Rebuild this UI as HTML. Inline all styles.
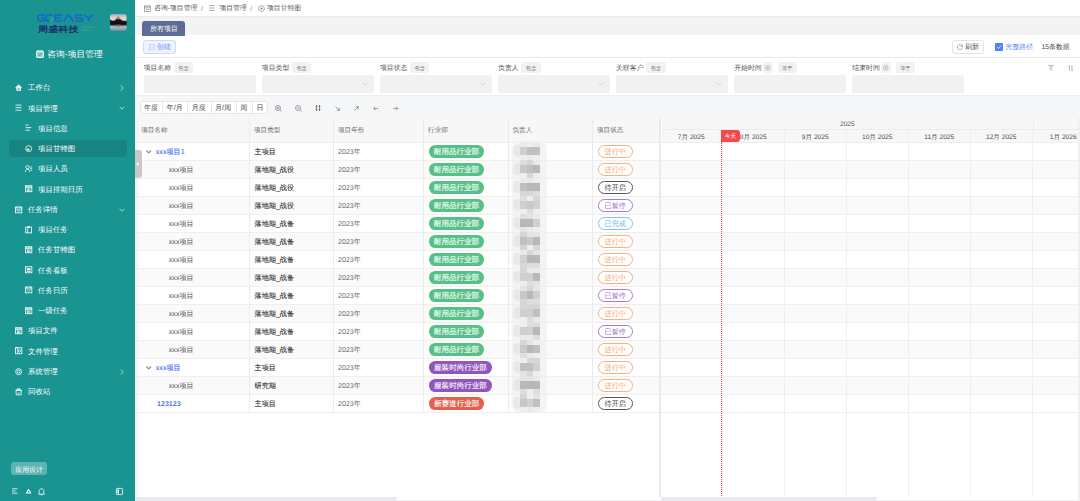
<!DOCTYPE html><html><head><meta charset="utf-8"><style>
*{box-sizing:border-box;margin:0;padding:0}
html,body{width:1080px;height:501px;overflow:hidden;background:#fff;font-family:"Liberation Sans",sans-serif;color:#333;text-rendering:geometricPrecision}
.a{position:absolute}
.t{position:absolute;white-space:nowrap;line-height:1}
.c{position:absolute;white-space:nowrap;display:flex;align-items:center;justify-content:center}
#sb{position:absolute;left:0;top:0;width:135px;height:501px;background:#1a9491;overflow:hidden}
.mi{position:absolute;color:#fff;font-size:7.45px;white-space:nowrap;line-height:1}
svg{position:absolute;overflow:visible}
</style></head><body><div id="sb"><svg style="left:37px;top:14px" width="57" height="8" viewBox="0 0 57 8"><g fill="none" stroke="#1763d4" stroke-width="1.5" stroke-linecap="butt"><path d="M7.6 1.1H3.2A2.5 2.9 0 0 0 0.75 4A2.5 2.9 0 0 0 3.2 6.9H7.3V4.2H4.3"/><path d="M15.5 1.1H11.6A2.6 2.9 0 0 0 9 4A2.6 2.9 0 0 0 11.6 6.9H13"/><path d="M24.8 1.1H18.2V6.9H24.8M18.2 4H24"/><path d="M26.5 7.5L31.5 0.8L36.5 7.5"/><path d="M45.5 1.1H39.8A1.4 1.45 0 0 0 39.8 4H44.2A1.4 1.45 0 0 1 44.2 6.9H38"/><path d="M47 0.8L51.8 4.2L56.6 0.8M51.8 4.2V7.5"/></g><path d="M13 6.9A2.6 2.9 0 0 0 15.6 4" stroke="#1fb59a" stroke-width="1.5" fill="none"/></svg><div class="t" style="left:37.5px;top:25.6px;font-size:8.2px;font-weight:bold;color:#1b2f68;transform:scaleX(1.24);transform-origin:0 0">周盛科技</div><div class="t" style="left:81px;top:25.8px;font-size:2.6px;color:#6fa9a8;line-height:1.25;letter-spacing:0.2px">ICHUANG<br>TECH</div><svg style="left:110px;top:14px" width="16.75" height="16.75" viewBox="0 0 17 17"><defs><clipPath id="av"><rect width="17" height="17" rx="2.6"/></clipPath><linearGradient id="sky" x1="0" y1="0" x2="0" y2="1"><stop offset="0" stop-color="#86a9cf"/><stop offset="0.4" stop-color="#e3d3c6"/></linearGradient><linearGradient id="wat" x1="0" y1="0" x2="0" y2="1"><stop offset="0" stop-color="#26303c"/><stop offset="0.5" stop-color="#a8b7c4"/><stop offset="1" stop-color="#7f9ab4"/></linearGradient></defs><g clip-path="url(#av)"><rect width="17" height="8.5" fill="url(#sky)"/><rect y="8.5" width="17" height="8.5" fill="url(#wat)"/><path d="M0 5.5L2 6.8L5 6.5L8.3 2.6L12 6.5L15 7L17 6.5V10.5H0Z" fill="#0d1420"/><path d="M8.3 2.6L6.6 5.2L7.6 5.6L8.6 5L10.2 5.7L11 5.5Z" fill="#e2804a"/><path d="M0 9.6H17V11H0Z" fill="#05080d"/><path d="M5.5 11L8.3 14.3L11.2 11Z" fill="#d37a45"/><path d="M0 11H17V11.5L12 11.6L8.3 11.4L4 11.7L0 11.5Z" fill="#1c2633"/></g></svg><div class="t" style="left:47.3px;top:50px;font-size:8.75px;color:#fff">咨询-项目管理</div><svg style="left:36px;top:50px" width="8" height="8" viewBox="0 0 8 8"><rect x="0.6" y="1" width="6.8" height="6.5" rx="0.5" fill="rgba(255,255,255,0.55)" stroke="#fff" stroke-width="0.9"/><path d="M2.2 0.2v1.6M5.8 0.2v1.6" stroke="#fff" stroke-width="1"/><path d="M2.3 4.4L3.4 5.7L5.7 3.6" stroke="#1a9491" fill="none" stroke-width="0.9"/></svg><div class="a" style="left:9px;top:140.2px;width:118px;height:17px;border-radius:3px;background:rgba(0,0,0,0.1)"></div><div class="mi" style="left:28px;top:84.45px">工作台</div><svg style="left:14.7px;top:84.2px" width="7.3" height="7.3" viewBox="0 0 8 8"><path d="M0.5 3.9L4 0.9L7.5 3.9" stroke="#fff" fill="none" stroke-width="0.9" stroke-width="1"/><path d="M1.5 3.4L4 1.3L6.5 3.4V7.4H1.5Z" fill="#fff"/><rect x="2.9" y="4.9" width="2.2" height="1.4" fill="#1a9491"/></svg><svg style="left:119.5px;top:85.00px" width="4" height="6" viewBox="0 0 4 6"><path d="M0.8 0.6L3.2 3L0.8 5.4" stroke="#cfe7e6" fill="none" stroke-width="0.8"/></svg><div class="mi" style="left:28px;top:104.70px">项目管理</div><svg style="left:14.7px;top:104.45px" width="7.3" height="7.3" viewBox="0 0 8 8"><path d="M0.5 1.2h6.6M0.5 4h6.6M0.5 6.8h6.6" stroke="#fff" fill="none" stroke-width="0.9" stroke-width="1"/></svg><svg style="left:118.5px;top:106.25px" width="6" height="4" viewBox="0 0 6 4"><path d="M0.6 0.8L3 3.2L5.4 0.8" stroke="#cfe7e6" fill="none" stroke-width="0.8"/></svg><div class="mi" style="left:38px;top:124.95px">项目信息</div><svg style="left:24.7px;top:124.3px" width="7.3" height="7.3" viewBox="0 0 8 8"><path d="M0.5 1.2h3.5M0.5 4h6.5M0.5 6.8h5" stroke="#fff" fill="none" stroke-width="0.9" stroke-width="1"/></svg><div class="mi" style="left:38px;top:145.20px">项目甘特图</div><svg style="left:24.7px;top:144.55px" width="7.3" height="7.3" viewBox="0 0 8 8"><circle cx="4" cy="4" r="3.25" stroke="#fff" fill="none" stroke-width="0.9" stroke-width="1"/><path d="M4.3 3.7L4.3 6A2.2 2.2 0 0 1 1.9 3.7Z" fill="#fff" transform="rotate(-20 4 4)"/></svg><div class="mi" style="left:38px;top:165.45px">项目人员</div><svg style="left:24.7px;top:164.8px" width="7.3" height="7.3" viewBox="0 0 8 8"><circle cx="2.8" cy="2.4" r="1.8" stroke="#fff" fill="none" stroke-width="0.9"/><path d="M0.3 7.6C0.6 5.6 1.6 4.6 2.8 4.6S5 5.6 5.3 7.6M5.8 2.2h2M5.8 4h2M6.2 5.8h1.6" stroke="#fff" fill="none" stroke-width="0.9"/></svg><div class="mi" style="left:38px;top:185.70px">项目排期日历</div><svg style="left:24.7px;top:185.05px" width="7.3" height="7.3" viewBox="0 0 8 8"><rect x="0.5" y="0.8" width="7" height="6.6" stroke="#fff" fill="none" stroke-width="0.9"/><path d="M0.5 2.3h7" stroke="#fff" stroke-width="1.4"/><path d="M2.6 3.6v3.6M4 3.6v3.6M5.4 3.6v3.6" stroke="#fff" fill="none" stroke-width="0.9" stroke-width="0.7"/></svg><div class="mi" style="left:28px;top:205.95px">任务详情</div><svg style="left:14.7px;top:205.7px" width="7.3" height="7.3" viewBox="0 0 8 8"><rect x="0.5" y="1.2" width="7" height="6.3" stroke="#fff" fill="none" stroke-width="0.9"/><path d="M2.3 0.2v2M5.7 0.2v2M0.5 3.4h7M2 5.3h4" stroke="#fff" fill="none" stroke-width="0.9"/></svg><svg style="left:118.5px;top:207.50px" width="6" height="4" viewBox="0 0 6 4"><path d="M0.6 0.8L3 3.2L5.4 0.8" stroke="#cfe7e6" fill="none" stroke-width="0.8"/></svg><div class="mi" style="left:38px;top:226.20px">项目任务</div><svg style="left:24.7px;top:225.55px" width="7.3" height="7.3" viewBox="0 0 8 8"><rect x="0.8" y="1.2" width="6.4" height="6.3" stroke="#fff" fill="none" stroke-width="0.9"/><rect x="2.5" y="0.4" width="3" height="1.8" fill="#fff"/><path d="M3 1.2v6.3" stroke="#fff" fill="none" stroke-width="0.9"/></svg><div class="mi" style="left:38px;top:246.45px">任务甘特图</div><svg style="left:24.7px;top:245.8px" width="7.3" height="7.3" viewBox="0 0 8 8"><rect x="0.5" y="0.8" width="7" height="6.6" stroke="#fff" fill="none" stroke-width="0.9"/><path d="M0.5 2.3h7" stroke="#fff" stroke-width="1.4"/><path d="M2.6 3.6v3.6M4 3.6v3.6M5.4 3.6v3.6" stroke="#fff" fill="none" stroke-width="0.9" stroke-width="0.7"/></svg><div class="mi" style="left:38px;top:266.70px">任务看板</div><svg style="left:24.7px;top:266.05px" width="7.3" height="7.3" viewBox="0 0 8 8"><rect x="0.5" y="0.8" width="7" height="6.6" stroke="#fff" fill="none" stroke-width="0.9"/><rect x="2" y="2.3" width="4" height="2.5" fill="#fff"/><path d="M2 6h4" stroke="#fff" fill="none" stroke-width="0.9"/></svg><div class="mi" style="left:38px;top:286.95px">任务日历</div><svg style="left:24.7px;top:286.3px" width="7.3" height="7.3" viewBox="0 0 8 8"><rect x="0.5" y="1.2" width="7" height="6.3" stroke="#fff" fill="none" stroke-width="0.9"/><path d="M2.3 0.2v2M5.7 0.2v2M0.5 3.2h7M2.5 5.2l1.2 1 2-2" stroke="#fff" fill="none" stroke-width="0.9"/></svg><div class="mi" style="left:38px;top:307.20px">一级任务</div><svg style="left:24.7px;top:306.55px" width="7.3" height="7.3" viewBox="0 0 8 8"><rect x="0.5" y="0.8" width="7" height="6.6" stroke="#fff" fill="none" stroke-width="0.9"/><path d="M0.5 2.3h7" stroke="#fff" stroke-width="1.4"/><path d="M2.6 3.6v3.6M4 3.6v3.6M5.4 3.6v3.6" stroke="#fff" fill="none" stroke-width="0.9" stroke-width="0.7"/></svg><div class="mi" style="left:28px;top:327.45px">项目文件</div><svg style="left:14.7px;top:327.2px" width="7.3" height="7.3" viewBox="0 0 8 8"><rect x="0.5" y="0.8" width="7" height="6.6" stroke="#fff" fill="none" stroke-width="0.9"/><path d="M0.5 2.3h7" stroke="#fff" stroke-width="1.4"/><path d="M2.6 3.6v3.6M4 3.6v3.6M5.4 3.6v3.6" stroke="#fff" fill="none" stroke-width="0.9" stroke-width="0.7"/></svg><div class="mi" style="left:28px;top:347.70px">文件管理</div><svg style="left:14.7px;top:347.45px" width="7.3" height="7.3" viewBox="0 0 8 8"><rect x="0.5" y="0.8" width="7" height="6.6" stroke="#fff" fill="none" stroke-width="0.9"/><path d="M0.5 0.8h2.5v6.6" stroke="#fff" fill="none" stroke-width="0.9"/><circle cx="4.9" cy="4.1" r="1.3" stroke="#fff" fill="none" stroke-width="0.9"/></svg><div class="mi" style="left:28px;top:367.95px">系统管理</div><svg style="left:14.7px;top:367.7px" width="7.3" height="7.3" viewBox="0 0 8 8"><circle cx="4" cy="4" r="3.3" stroke="#fff" fill="none" stroke-width="0.9" stroke-width="1"/><circle cx="4" cy="4" r="1.5" stroke="#fff" fill="none" stroke-width="0.9"/></svg><svg style="left:119.5px;top:368.50px" width="4" height="6" viewBox="0 0 4 6"><path d="M0.8 0.6L3.2 3L0.8 5.4" stroke="#cfe7e6" fill="none" stroke-width="0.8"/></svg><div class="mi" style="left:28px;top:388.20px">回收站</div><svg style="left:14.7px;top:387.95px" width="7.3" height="7.3" viewBox="0 0 8 8"><path d="M1.2 2.4h5.6v5.1H1.2zM0.5 2.4h7M2.7 2.4V0.8h2.6v1.6M2.8 5.6h2.4" stroke="#fff" fill="none" stroke-width="0.9"/></svg><div class="c" style="left:11.3px;top:462px;width:35.6px;height:13.4px;border-radius:3px;background:rgba(255,255,255,0.3);color:#fff;font-size:6.9px;padding-top:3.6px">应用设计</div><svg style="left:12px;top:488px" width="6" height="6" viewBox="0 0 6 6"><path d="M0 0.8h5.5M0 3h3.5M0 5.2h5.5" stroke="#fff" stroke-width="0.8"/></svg><svg style="left:25px;top:488px" width="7" height="6" viewBox="0 0 7 6"><path d="M3.5 0.5L6.5 5.5H0.5Z" fill="#fff"/><path d="M3.5 2.6L4.6 4.6H2.4Z" fill="#1a9491"/></svg><svg style="left:38px;top:487.5px" width="7" height="7.5" viewBox="0 0 7 7.5"><path d="M1.2 5.5V3.3C1.2 1.8 2.2 0.8 3.5 0.8S5.8 1.8 5.8 3.3V5.5L6.5 6.2H0.5Z M2.7 6.6C2.9 7.1 4.1 7.1 4.3 6.6" stroke="#fff" fill="none" stroke-width="0.8"/></svg><svg style="left:116px;top:488px" width="7" height="7" viewBox="0 0 7 7"><rect x="0.4" y="0.4" width="6.2" height="6.2" rx="0.8" stroke="#fff" fill="none" stroke-width="0.8"/><rect x="1.4" y="1.4" width="1.6" height="4.2" fill="#fff"/></svg></div><div class="a" style="left:135px;top:0;width:945px;height:501px;background:#fff;overflow:hidden"><svg style="left:9.00px;top:5px" width="7" height="7" viewBox="0 0 7 7"><rect x="0.4" y="1" width="6.2" height="5.6" stroke="#888" fill="none" stroke-width="0.7"/><path d="M2 0.2v1.6M5 0.2v1.6M0.4 2.8h6.2M2 4.5h3" stroke="#888" stroke-width="0.7"/></svg><div class="t" style="left:19.20px;top:6px;font-size:6.8px;color:#555">咨询-项目管理</div><div class="t" style="left:66.00px;top:5.8px;font-size:7px;color:#888">/</div><svg style="left:74.00px;top:5.3px" width="6" height="6" viewBox="0 0 6 6"><path d="M0 0.6h5.5M0 3h5.5M0 5.4h5.5" stroke="#888" stroke-width="0.7"/></svg><div class="t" style="left:84.50px;top:6px;font-size:6.8px;color:#555">项目管理</div><div class="t" style="left:115.20px;top:5.8px;font-size:7px;color:#888">/</div><svg style="left:123.00px;top:5px" width="7" height="7" viewBox="0 0 7 7"><circle cx="3.5" cy="3.5" r="2.9" stroke="#888" fill="none" stroke-width="0.7"/><circle cx="3.5" cy="3.5" r="1.1" fill="#888"/></svg><div class="t" style="left:132.00px;top:6px;font-size:6.8px;color:#555">项目甘特图</div><div class="a" style="left:0;top:16px;width:945px;height:19px;background:#f3f3f3;border-top:1px solid #ececec"></div><div class="c" style="left:7.00px;top:20.8px;width:43px;height:15px;background:#5c6d94;border-radius:3px 3px 0 0;color:#fff;font-size:6.9px;padding-top:3px;padding-left:1px">所有项目</div><div class="a" style="left:8.20px;top:40px;width:32.8px;height:13.8px;background:#eef4ff;border:0.6px solid #c9dbff;border-radius:2.5px"></div><svg style="left:14.00px;top:44px" width="6" height="6" viewBox="0 0 6 6"><rect x="0.3" y="0.8" width="5.4" height="4.4" stroke="#9bb3f7" fill="none" stroke-width="0.5"/><path d="M1.5 3h3" stroke="#9bb3f7" stroke-width="0.5"/></svg><div class="t" style="left:22.00px;top:44.2px;font-size:7.1px;color:#6d8ef5">创建</div><div class="a" style="left:817.00px;top:40px;width:31.5px;height:13.5px;background:#fff;border:0.6px solid #e3e3e3;border-radius:2.5px"></div><svg style="left:822.00px;top:43.5px" width="6" height="6" viewBox="0 0 6 6"><path d="M5.2 2.2A2.5 2.5 0 1 0 5.3 3.8" stroke="#777" fill="none" stroke-width="0.6"/><path d="M5.4 0.8v1.6H3.8" stroke="#777" fill="none" stroke-width="0.6"/></svg><div class="t" style="left:830.00px;top:44.2px;font-size:7.1px;color:#555">刷新</div><div class="a" style="left:860.00px;top:42.8px;width:8px;height:8px;background:#4c84f5;border-radius:1px"></div><svg style="left:861.00px;top:43.8px" width="6" height="6" viewBox="0 0 6 6"><path d="M1 3.1L2.5 4.5L5 1.6" stroke="#fff" fill="none" stroke-width="0.8"/></svg><div class="t" style="left:870.50px;top:45.3px;font-size:6.9px;color:#5f86f5">完整路径</div><div class="t" style="left:906.50px;top:44.8px;font-size:6.85px;color:#444">15条数据</div><div class="a" style="left:0;top:56.8px;width:945px;height:0.8px;background:#e8e8e8"></div><div class="t" style="left:8.70px;top:66.3px;font-size:6.88px;color:#555">项目名称</div><div class="c" style="left:38.72px;top:62.2px;width:19.5px;height:11px;background:#f2f2f2;border-radius:2px;font-size:5.2px;color:#777;padding-top:1.2px">包含</div><div class="a" style="left:8.70px;top:75px;width:111.9px;height:17.8px;background:#f1f1f1;border-radius:2.5px"></div><div class="t" style="left:126.80px;top:66.3px;font-size:6.88px;color:#555">项目类型</div><div class="c" style="left:156.82px;top:62.2px;width:19.5px;height:11px;background:#f2f2f2;border-radius:2px;font-size:5.2px;color:#777;padding-top:1.2px">包含</div><div class="a" style="left:126.80px;top:75px;width:111.9px;height:17.8px;background:#f1f1f1;border-radius:2.5px"></div><svg style="left:227.00px;top:82px" width="6" height="3.5" viewBox="0 0 6 3.5"><path d="M0.3 0.3L3 3L5.7 0.3" stroke="#c3c6cc" fill="none" stroke-width="0.6"/></svg><div class="t" style="left:244.90px;top:66.3px;font-size:6.88px;color:#555">项目状态</div><div class="c" style="left:274.92px;top:62.2px;width:19.5px;height:11px;background:#f2f2f2;border-radius:2px;font-size:5.2px;color:#777;padding-top:1.2px">包含</div><div class="a" style="left:244.90px;top:75px;width:111.9px;height:17.8px;background:#f1f1f1;border-radius:2.5px"></div><svg style="left:345.10px;top:82px" width="6" height="3.5" viewBox="0 0 6 3.5"><path d="M0.3 0.3L3 3L5.7 0.3" stroke="#c3c6cc" fill="none" stroke-width="0.6"/></svg><div class="t" style="left:363.00px;top:66.3px;font-size:6.88px;color:#555">负责人</div><div class="c" style="left:386.14px;top:62.2px;width:19.5px;height:11px;background:#f2f2f2;border-radius:2px;font-size:5.2px;color:#777;padding-top:1.2px">包含</div><div class="a" style="left:363.00px;top:75px;width:111.9px;height:17.8px;background:#f1f1f1;border-radius:2.5px"></div><svg style="left:463.20px;top:82px" width="6" height="3.5" viewBox="0 0 6 3.5"><path d="M0.3 0.3L3 3L5.7 0.3" stroke="#c3c6cc" fill="none" stroke-width="0.6"/></svg><div class="t" style="left:481.10px;top:66.3px;font-size:6.88px;color:#555">关联客户</div><div class="c" style="left:511.12px;top:62.2px;width:19.5px;height:11px;background:#f2f2f2;border-radius:2px;font-size:5.2px;color:#777;padding-top:1.2px">包含</div><div class="a" style="left:481.10px;top:75px;width:111.9px;height:17.8px;background:#f1f1f1;border-radius:2.5px"></div><svg style="left:581.30px;top:82px" width="6" height="3.5" viewBox="0 0 6 3.5"><path d="M0.3 0.3L3 3L5.7 0.3" stroke="#c3c6cc" fill="none" stroke-width="0.6"/></svg><div class="t" style="left:599.20px;top:66.3px;font-size:6.88px;color:#555">开始时间</div><div class="a" style="left:627.52px;top:62.2px;width:10.7px;height:11px;background:#f2f2f2;border-radius:2px"></div><svg style="left:630.12px;top:65px" width="5.5" height="5.5" viewBox="0 0 6 6"><circle cx="3" cy="3" r="2.5" stroke="#999" fill="none" stroke-width="0.6"/><circle cx="3" cy="3" r="0.9" fill="#999"/></svg><div class="c" style="left:642.52px;top:62.2px;width:19.5px;height:11px;background:#f2f2f2;border-radius:2px;font-size:5.2px;color:#777;padding-top:1.2px">等于</div><div class="a" style="left:599.20px;top:75px;width:111.9px;height:17.8px;background:#f1f1f1;border-radius:2.5px"></div><div class="t" style="left:717.30px;top:66.3px;font-size:6.88px;color:#555">结束时间</div><div class="a" style="left:745.62px;top:62.2px;width:10.7px;height:11px;background:#f2f2f2;border-radius:2px"></div><svg style="left:748.22px;top:65px" width="5.5" height="5.5" viewBox="0 0 6 6"><circle cx="3" cy="3" r="2.5" stroke="#999" fill="none" stroke-width="0.6"/><circle cx="3" cy="3" r="0.9" fill="#999"/></svg><div class="c" style="left:760.62px;top:62.2px;width:19.5px;height:11px;background:#f2f2f2;border-radius:2px;font-size:5.2px;color:#777;padding-top:1.2px">等于</div><div class="a" style="left:717.30px;top:75px;width:111.9px;height:17.8px;background:#f1f1f1;border-radius:2.5px"></div><svg style="left:913.20px;top:64.5px" width="6" height="6" viewBox="0 0 7 7"><path d="M0.3 0.6h6.4M1.5 2.4h4M2.6 4.2h1.8M3.5 4.2v2.6" stroke="#888" fill="none" stroke-width="0.7"/></svg><svg style="left:932.50px;top:64.5px" width="5.3" height="6.2" viewBox="0 0 6 7"><path d="M1.6 6.6V0.5L0.3 1.8M4.4 0.4v6.1L5.7 5.2" stroke="#888" fill="none" stroke-width="0.7"/></svg><div class="a" style="left:0;top:95px;width:945px;height:406px;background:#f5f6f8;border-top:1.2px solid #eeeff1"></div><div class="a" style="left:4.80px;top:101.3px;width:128.50px;height:13.2px;background:#fff;border:0.6px solid #e6e6e6;border-radius:3px"></div><div class="c" style="left:4.80px;top:101.3px;width:22.40px;height:13.2px;font-size:7.1px;color:#444;padding-top:2.2px">年度</div><div class="a" style="left:27.20px;top:101.3px;width:0.6px;height:13.2px;background:#e8e8e8"></div><div class="c" style="left:27.20px;top:101.3px;width:25.00px;height:13.2px;font-size:7.1px;color:#444;padding-top:2.2px">年/月</div><div class="a" style="left:52.20px;top:101.3px;width:0.6px;height:13.2px;background:#e8e8e8"></div><div class="c" style="left:52.20px;top:101.3px;width:23.30px;height:13.2px;font-size:7.1px;color:#444;padding-top:2.2px">月度</div><div class="a" style="left:75.50px;top:101.3px;width:0.6px;height:13.2px;background:#e8e8e8"></div><div class="c" style="left:75.50px;top:101.3px;width:25.00px;height:13.2px;font-size:7.1px;color:#444;padding-top:2.2px">月/周</div><div class="a" style="left:100.50px;top:101.3px;width:0.6px;height:13.2px;background:#e8e8e8"></div><div class="c" style="left:100.50px;top:101.3px;width:16.50px;height:13.2px;font-size:7.1px;color:#444;padding-top:2.2px">周</div><div class="a" style="left:117.00px;top:101.3px;width:0.6px;height:13.2px;background:#e8e8e8"></div><div class="c" style="left:117.00px;top:101.3px;width:16.30px;height:13.2px;font-size:7.1px;color:#444;padding-top:2.2px">日</div><svg style="left:140.00px;top:105px" width="7" height="7" viewBox="0 0 7 7"><circle cx="3" cy="3" r="2.5" stroke="#888" fill="none" stroke-width="0.8"/><path d="M4.8 4.8L6.5 6.5M1.8 3h2.4M3 1.8v2.4" stroke="#888" fill="none" stroke-width="0.8"/></svg><svg style="left:160.00px;top:105px" width="7" height="7" viewBox="0 0 7 7"><circle cx="3" cy="3" r="2.5" stroke="#888" fill="none" stroke-width="0.8"/><path d="M4.8 4.8L6.5 6.5M1.8 3h2.4" stroke="#888" fill="none" stroke-width="0.8"/></svg><svg style="left:180.00px;top:105px" width="6" height="6" viewBox="0 0 6 6"><path d="M1.5 0v2.2M4.5 0v2.2M1.5 3.8V6M4.5 3.8V6" stroke="#666" fill="none" stroke-width="0.9"/><path d="M0.5 1.6L1.5 2.6L2.5 1.6M3.5 1.6L4.5 2.6L5.5 1.6M0.5 4.4L1.5 3.4L2.5 4.4M3.5 4.4L4.5 3.4L5.5 4.4" stroke="#666" fill="none" stroke-width="0.8"/></svg><svg style="left:200.00px;top:105.5px" width="5" height="5" viewBox="0 0 5 5"><path d="M0.5 0.5L4.3 4.3M1.6 4.3h2.7V1.6" stroke="#888" fill="none" stroke-width="0.8"/></svg><svg style="left:219.00px;top:105.5px" width="5" height="5" viewBox="0 0 5 5"><path d="M0.5 4.5L4.3 0.7M1.6 0.7h2.7v2.7" stroke="#888" fill="none" stroke-width="0.8"/></svg><svg style="left:238.00px;top:105.5px" width="5.5" height="5" viewBox="0 0 5.5 5"><path d="M5.2 2.5H0.6M2.5 0.6L0.6 2.5L2.5 4.4" stroke="#888" fill="none" stroke-width="0.8"/></svg><svg style="left:257.50px;top:105.5px" width="5.5" height="5" viewBox="0 0 5.5 5"><path d="M0.3 2.5H4.9M3 0.6L4.9 2.5L3 4.4" stroke="#888" fill="none" stroke-width="0.8"/></svg><div class="a" style="left:1.50px;top:117.5px;width:941.50px;height:383.50px;background:#fff;border-left:1px solid #ededed"></div><div class="a" style="left:2.50px;top:117.5px;width:521.50px;height:24.5px;background:#f7f7f8"></div><div class="a" style="left:2.50px;top:142px;width:940.50px;height:18px;background:#fff;border-top:0.6px solid #efefef"></div><div class="a" style="left:2.50px;top:160px;width:940.50px;height:18px;background:#fafafa;border-top:0.6px solid #efefef"></div><div class="a" style="left:2.50px;top:178px;width:940.50px;height:18px;background:#fff;border-top:0.6px solid #efefef"></div><div class="a" style="left:2.50px;top:196px;width:940.50px;height:18px;background:#fafafa;border-top:0.6px solid #efefef"></div><div class="a" style="left:2.50px;top:214px;width:940.50px;height:18px;background:#fff;border-top:0.6px solid #efefef"></div><div class="a" style="left:2.50px;top:232px;width:940.50px;height:18px;background:#fafafa;border-top:0.6px solid #efefef"></div><div class="a" style="left:2.50px;top:250px;width:940.50px;height:18px;background:#fff;border-top:0.6px solid #efefef"></div><div class="a" style="left:2.50px;top:268px;width:940.50px;height:18px;background:#fafafa;border-top:0.6px solid #efefef"></div><div class="a" style="left:2.50px;top:286px;width:940.50px;height:18px;background:#fff;border-top:0.6px solid #efefef"></div><div class="a" style="left:2.50px;top:304px;width:940.50px;height:18px;background:#fafafa;border-top:0.6px solid #efefef"></div><div class="a" style="left:2.50px;top:322px;width:940.50px;height:18px;background:#fff;border-top:0.6px solid #efefef"></div><div class="a" style="left:2.50px;top:340px;width:940.50px;height:18px;background:#fafafa;border-top:0.6px solid #efefef"></div><div class="a" style="left:2.50px;top:358px;width:940.50px;height:18px;background:#fff;border-top:0.6px solid #efefef"></div><div class="a" style="left:2.50px;top:376px;width:940.50px;height:18px;background:#fafafa;border-top:0.6px solid #efefef"></div><div class="a" style="left:2.50px;top:394px;width:940.50px;height:18px;background:#fff;border-top:0.6px solid #efefef"></div><div class="a" style="left:2.50px;top:412px;width:940.50px;height:0.6px;background:#efefef"></div><div class="a" style="left:114.20px;top:117.5px;width:0.6px;height:294.50px;background:#ececec"></div><div class="a" style="left:198.20px;top:117.5px;width:0.6px;height:294.50px;background:#ececec"></div><div class="a" style="left:288.20px;top:117.5px;width:0.6px;height:294.50px;background:#ececec"></div><div class="a" style="left:373.20px;top:117.5px;width:0.6px;height:294.50px;background:#ececec"></div><div class="a" style="left:457.20px;top:117.5px;width:0.6px;height:294.50px;background:#ececec"></div><div class="t" style="left:6.20px;top:127.5px;font-size:6.58px;color:#666">项目名称</div><div class="t" style="left:119.00px;top:127.5px;font-size:6.58px;color:#666">项目类型</div><div class="t" style="left:203.00px;top:127.5px;font-size:6.58px;color:#666">项目年份</div><div class="t" style="left:293.00px;top:127.5px;font-size:6.58px;color:#666">行业部</div><div class="t" style="left:377.50px;top:127.5px;font-size:6.58px;color:#666">负责人</div><div class="t" style="left:462.00px;top:127.5px;font-size:6.58px;color:#666">项目状态</div><svg style="left:10.50px;top:149.70px" width="5.5" height="3.5" viewBox="0 0 5.5 3.5"><path d="M0.5 0.5L2.75 2.9L5 0.5" stroke="#8a8a8a" fill="none" stroke-width="1.1"/></svg><div class="t" style="left:20.80px;top:148.90px;font-size:7.1px;color:#4a76f2;-webkit-text-stroke:0.15px #4a76f2">xxx项目1</div><div class="t" style="left:119.60px;top:148.90px;font-size:7.1px;color:#262626;-webkit-text-stroke:0.08px #262626">主项目</div><div class="t" style="left:203.00px;top:148.90px;font-size:7.1px;color:#666">2023年</div><div class="c" style="left:294.00px;top:145.00px;width:55px;height:12.8px;border-radius:6.4px;background:#55c186;color:#fff;font-size:7.55px;padding-top:1.3px;-webkit-text-stroke:0.1px #fff">耐用品行业部</div><div class="c" style="left:463.00px;top:145.00px;width:34.5px;height:12.7px;border-radius:6.4px;border:0.75px solid #f8b07c;background:#fff;color:#f39c5c;font-size:7.1px;padding-top:3.6px">进行中</div><div class="t" style="left:33.80px;top:166.90px;font-size:7.1px;color:#555">xxx项目</div><div class="t" style="left:119.60px;top:166.90px;font-size:7.1px;color:#262626;-webkit-text-stroke:0.08px #262626">落地期_战役</div><div class="t" style="left:203.00px;top:166.90px;font-size:7.1px;color:#666">2023年</div><div class="c" style="left:294.00px;top:163.00px;width:55px;height:12.8px;border-radius:6.4px;background:#55c186;color:#fff;font-size:7.55px;padding-top:1.3px;-webkit-text-stroke:0.1px #fff">耐用品行业部</div><div class="c" style="left:463.00px;top:163.00px;width:34.5px;height:12.7px;border-radius:6.4px;border:0.75px solid #f8b07c;background:#fff;color:#f39c5c;font-size:7.1px;padding-top:3.6px">进行中</div><div class="t" style="left:33.80px;top:184.90px;font-size:7.1px;color:#555">xxx项目</div><div class="t" style="left:119.60px;top:184.90px;font-size:7.1px;color:#262626;-webkit-text-stroke:0.08px #262626">落地期_战役</div><div class="t" style="left:203.00px;top:184.90px;font-size:7.1px;color:#666">2023年</div><div class="c" style="left:294.00px;top:181.00px;width:55px;height:12.8px;border-radius:6.4px;background:#55c186;color:#fff;font-size:7.55px;padding-top:1.3px;-webkit-text-stroke:0.1px #fff">耐用品行业部</div><div class="c" style="left:463.00px;top:181.00px;width:34.5px;height:12.7px;border-radius:6.4px;border:0.75px solid #555;background:#fff;color:#333;font-size:7.1px;padding-top:3.6px">待开启</div><div class="t" style="left:33.80px;top:202.90px;font-size:7.1px;color:#555">xxx项目</div><div class="t" style="left:119.60px;top:202.90px;font-size:7.1px;color:#262626;-webkit-text-stroke:0.08px #262626">落地期_战役</div><div class="t" style="left:203.00px;top:202.90px;font-size:7.1px;color:#666">2023年</div><div class="c" style="left:294.00px;top:199.00px;width:55px;height:12.8px;border-radius:6.4px;background:#55c186;color:#fff;font-size:7.55px;padding-top:1.3px;-webkit-text-stroke:0.1px #fff">耐用品行业部</div><div class="c" style="left:463.00px;top:199.00px;width:34.5px;height:12.7px;border-radius:6.4px;border:0.75px solid #a77bd3;background:#fff;color:#9b6cc8;font-size:7.1px;padding-top:3.6px">已暂停</div><div class="t" style="left:33.80px;top:220.90px;font-size:7.1px;color:#555">xxx项目</div><div class="t" style="left:119.60px;top:220.90px;font-size:7.1px;color:#262626;-webkit-text-stroke:0.08px #262626">落地期_战备</div><div class="t" style="left:203.00px;top:220.90px;font-size:7.1px;color:#666">2023年</div><div class="c" style="left:294.00px;top:217.00px;width:55px;height:12.8px;border-radius:6.4px;background:#55c186;color:#fff;font-size:7.55px;padding-top:1.3px;-webkit-text-stroke:0.1px #fff">耐用品行业部</div><div class="c" style="left:463.00px;top:217.00px;width:34.5px;height:12.7px;border-radius:6.4px;border:0.75px solid #7cc6ef;background:#fff;color:#5db3e6;font-size:7.1px;padding-top:3.6px">已完成</div><div class="t" style="left:33.80px;top:238.90px;font-size:7.1px;color:#555">xxx项目</div><div class="t" style="left:119.60px;top:238.90px;font-size:7.1px;color:#262626;-webkit-text-stroke:0.08px #262626">落地期_战备</div><div class="t" style="left:203.00px;top:238.90px;font-size:7.1px;color:#666">2023年</div><div class="c" style="left:294.00px;top:235.00px;width:55px;height:12.8px;border-radius:6.4px;background:#55c186;color:#fff;font-size:7.55px;padding-top:1.3px;-webkit-text-stroke:0.1px #fff">耐用品行业部</div><div class="c" style="left:463.00px;top:235.00px;width:34.5px;height:12.7px;border-radius:6.4px;border:0.75px solid #f8b07c;background:#fff;color:#f39c5c;font-size:7.1px;padding-top:3.6px">进行中</div><div class="t" style="left:33.80px;top:256.90px;font-size:7.1px;color:#555">xxx项目</div><div class="t" style="left:119.60px;top:256.90px;font-size:7.1px;color:#262626;-webkit-text-stroke:0.08px #262626">落地期_战备</div><div class="t" style="left:203.00px;top:256.90px;font-size:7.1px;color:#666">2023年</div><div class="c" style="left:294.00px;top:253.00px;width:55px;height:12.8px;border-radius:6.4px;background:#55c186;color:#fff;font-size:7.55px;padding-top:1.3px;-webkit-text-stroke:0.1px #fff">耐用品行业部</div><div class="c" style="left:463.00px;top:253.00px;width:34.5px;height:12.7px;border-radius:6.4px;border:0.75px solid #f8b07c;background:#fff;color:#f39c5c;font-size:7.1px;padding-top:3.6px">进行中</div><div class="t" style="left:33.80px;top:274.90px;font-size:7.1px;color:#555">xxx项目</div><div class="t" style="left:119.60px;top:274.90px;font-size:7.1px;color:#262626;-webkit-text-stroke:0.08px #262626">落地期_战备</div><div class="t" style="left:203.00px;top:274.90px;font-size:7.1px;color:#666">2023年</div><div class="c" style="left:294.00px;top:271.00px;width:55px;height:12.8px;border-radius:6.4px;background:#55c186;color:#fff;font-size:7.55px;padding-top:1.3px;-webkit-text-stroke:0.1px #fff">耐用品行业部</div><div class="c" style="left:463.00px;top:271.00px;width:34.5px;height:12.7px;border-radius:6.4px;border:0.75px solid #f8b07c;background:#fff;color:#f39c5c;font-size:7.1px;padding-top:3.6px">进行中</div><div class="t" style="left:33.80px;top:292.90px;font-size:7.1px;color:#555">xxx项目</div><div class="t" style="left:119.60px;top:292.90px;font-size:7.1px;color:#262626;-webkit-text-stroke:0.08px #262626">落地期_战备</div><div class="t" style="left:203.00px;top:292.90px;font-size:7.1px;color:#666">2023年</div><div class="c" style="left:294.00px;top:289.00px;width:55px;height:12.8px;border-radius:6.4px;background:#55c186;color:#fff;font-size:7.55px;padding-top:1.3px;-webkit-text-stroke:0.1px #fff">耐用品行业部</div><div class="c" style="left:463.00px;top:289.00px;width:34.5px;height:12.7px;border-radius:6.4px;border:0.75px solid #a77bd3;background:#fff;color:#9b6cc8;font-size:7.1px;padding-top:3.6px">已暂停</div><div class="t" style="left:33.80px;top:310.90px;font-size:7.1px;color:#555">xxx项目</div><div class="t" style="left:119.60px;top:310.90px;font-size:7.1px;color:#262626;-webkit-text-stroke:0.08px #262626">落地期_战备</div><div class="t" style="left:203.00px;top:310.90px;font-size:7.1px;color:#666">2023年</div><div class="c" style="left:294.00px;top:307.00px;width:55px;height:12.8px;border-radius:6.4px;background:#55c186;color:#fff;font-size:7.55px;padding-top:1.3px;-webkit-text-stroke:0.1px #fff">耐用品行业部</div><div class="c" style="left:463.00px;top:307.00px;width:34.5px;height:12.7px;border-radius:6.4px;border:0.75px solid #f8b07c;background:#fff;color:#f39c5c;font-size:7.1px;padding-top:3.6px">进行中</div><div class="t" style="left:33.80px;top:328.90px;font-size:7.1px;color:#555">xxx项目</div><div class="t" style="left:119.60px;top:328.90px;font-size:7.1px;color:#262626;-webkit-text-stroke:0.08px #262626">落地期_战备</div><div class="t" style="left:203.00px;top:328.90px;font-size:7.1px;color:#666">2023年</div><div class="c" style="left:294.00px;top:325.00px;width:55px;height:12.8px;border-radius:6.4px;background:#55c186;color:#fff;font-size:7.55px;padding-top:1.3px;-webkit-text-stroke:0.1px #fff">耐用品行业部</div><div class="c" style="left:463.00px;top:325.00px;width:34.5px;height:12.7px;border-radius:6.4px;border:0.75px solid #a77bd3;background:#fff;color:#9b6cc8;font-size:7.1px;padding-top:3.6px">已暂停</div><div class="t" style="left:33.80px;top:346.90px;font-size:7.1px;color:#555">xxx项目</div><div class="t" style="left:119.60px;top:346.90px;font-size:7.1px;color:#262626;-webkit-text-stroke:0.08px #262626">落地期_战备</div><div class="t" style="left:203.00px;top:346.90px;font-size:7.1px;color:#666">2023年</div><div class="c" style="left:294.00px;top:343.00px;width:55px;height:12.8px;border-radius:6.4px;background:#55c186;color:#fff;font-size:7.55px;padding-top:1.3px;-webkit-text-stroke:0.1px #fff">耐用品行业部</div><div class="c" style="left:463.00px;top:343.00px;width:34.5px;height:12.7px;border-radius:6.4px;border:0.75px solid #f8b07c;background:#fff;color:#f39c5c;font-size:7.1px;padding-top:3.6px">进行中</div><svg style="left:10.50px;top:365.70px" width="5.5" height="3.5" viewBox="0 0 5.5 3.5"><path d="M0.5 0.5L2.75 2.9L5 0.5" stroke="#8a8a8a" fill="none" stroke-width="1.1"/></svg><div class="t" style="left:20.80px;top:364.90px;font-size:7.1px;color:#4a76f2;-webkit-text-stroke:0.15px #4a76f2">xxx项目</div><div class="t" style="left:119.60px;top:364.90px;font-size:7.1px;color:#262626;-webkit-text-stroke:0.08px #262626">主项目</div><div class="t" style="left:203.00px;top:364.90px;font-size:7.1px;color:#666">2023年</div><div class="c" style="left:294.00px;top:361.00px;width:62.9px;height:12.8px;border-radius:6.4px;background:#9056be;color:#fff;font-size:7.55px;padding-top:1.3px;-webkit-text-stroke:0.1px #fff">服装时尚行业部</div><div class="c" style="left:463.00px;top:361.00px;width:34.5px;height:12.7px;border-radius:6.4px;border:0.75px solid #f8b07c;background:#fff;color:#f39c5c;font-size:7.1px;padding-top:3.6px">进行中</div><div class="t" style="left:33.80px;top:382.90px;font-size:7.1px;color:#555">xxx项目</div><div class="t" style="left:119.60px;top:382.90px;font-size:7.1px;color:#262626;-webkit-text-stroke:0.08px #262626">研究期</div><div class="t" style="left:203.00px;top:382.90px;font-size:7.1px;color:#666">2023年</div><div class="c" style="left:294.00px;top:379.00px;width:62.9px;height:12.8px;border-radius:6.4px;background:#9056be;color:#fff;font-size:7.55px;padding-top:1.3px;-webkit-text-stroke:0.1px #fff">服装时尚行业部</div><div class="c" style="left:463.00px;top:379.00px;width:34.5px;height:12.7px;border-radius:6.4px;border:0.75px solid #f8b07c;background:#fff;color:#f39c5c;font-size:7.1px;padding-top:3.6px">进行中</div><div class="t" style="left:22.00px;top:400.90px;font-size:7.1px;color:#4f78f0;font-weight:bold">123123</div><div class="t" style="left:119.60px;top:400.90px;font-size:7.1px;color:#262626;-webkit-text-stroke:0.08px #262626">主项目</div><div class="t" style="left:203.00px;top:400.90px;font-size:7.1px;color:#666">2023年</div><div class="c" style="left:294.00px;top:397.00px;width:55.3px;height:12.8px;border-radius:6.4px;background:#e5604c;color:#fff;font-size:7.55px;padding-top:1.3px;-webkit-text-stroke:0.1px #fff">新赛道行业部</div><div class="c" style="left:463.00px;top:397.00px;width:34.5px;height:12.7px;border-radius:6.4px;border:0.75px solid #555;background:#fff;color:#333;font-size:7.1px;padding-top:3.6px">待开启</div><div class="a" style="left:377.00px;top:141px;width:35px;height:271px;background:rgba(240,240,240,0.75);border-radius:7px"></div><div class="a" style="left:377.50px;top:145.00px;width:10px;height:12px;border-radius:6px;background:#e8e8e8"></div><div class="a" style="left:384.80px;top:142.00px;width:6.8px;height:5.05px;background:rgb(234,234,234)"></div><div class="a" style="left:391.55px;top:142.00px;width:6.8px;height:5.05px;background:rgb(238,238,238)"></div><div class="a" style="left:398.30px;top:142.00px;width:6.8px;height:5.05px;background:rgb(234,234,234)"></div><div class="a" style="left:384.80px;top:147.00px;width:6.8px;height:7.55px;background:rgb(208,208,208)"></div><div class="a" style="left:391.55px;top:147.00px;width:6.8px;height:7.55px;background:rgb(192,192,192)"></div><div class="a" style="left:398.30px;top:147.00px;width:6.8px;height:7.55px;background:rgb(192,192,192)"></div><div class="a" style="left:384.80px;top:154.50px;width:6.8px;height:5.55px;background:rgb(238,238,238)"></div><div class="a" style="left:391.55px;top:154.50px;width:6.8px;height:5.55px;background:rgb(234,234,234)"></div><div class="a" style="left:398.30px;top:154.50px;width:6.8px;height:5.55px;background:rgb(238,238,238)"></div><div class="a" style="left:377.50px;top:163.00px;width:10px;height:12px;border-radius:6px;background:#e8e8e8"></div><div class="a" style="left:384.80px;top:160.00px;width:6.8px;height:5.05px;background:rgb(222,222,222)"></div><div class="a" style="left:391.55px;top:160.00px;width:6.8px;height:5.05px;background:rgb(214,214,214)"></div><div class="a" style="left:398.30px;top:160.00px;width:6.8px;height:5.05px;background:rgb(234,234,234)"></div><div class="a" style="left:384.80px;top:165.00px;width:6.8px;height:7.55px;background:rgb(200,200,200)"></div><div class="a" style="left:391.55px;top:165.00px;width:6.8px;height:7.55px;background:rgb(192,192,192)"></div><div class="a" style="left:398.30px;top:165.00px;width:6.8px;height:7.55px;background:rgb(184,184,184)"></div><div class="a" style="left:384.80px;top:172.50px;width:6.8px;height:5.55px;background:rgb(238,238,238)"></div><div class="a" style="left:391.55px;top:172.50px;width:6.8px;height:5.55px;background:rgb(214,214,214)"></div><div class="a" style="left:398.30px;top:172.50px;width:6.8px;height:5.55px;background:rgb(238,238,238)"></div><div class="a" style="left:377.50px;top:181.00px;width:10px;height:12px;border-radius:6px;background:#e8e8e8"></div><div class="a" style="left:384.80px;top:178.00px;width:6.8px;height:5.05px;background:rgb(234,234,234)"></div><div class="a" style="left:391.55px;top:178.00px;width:6.8px;height:5.05px;background:rgb(234,234,234)"></div><div class="a" style="left:398.30px;top:178.00px;width:6.8px;height:5.05px;background:rgb(238,238,238)"></div><div class="a" style="left:384.80px;top:183.00px;width:6.8px;height:7.55px;background:rgb(192,192,192)"></div><div class="a" style="left:391.55px;top:183.00px;width:6.8px;height:7.55px;background:rgb(184,184,184)"></div><div class="a" style="left:398.30px;top:183.00px;width:6.8px;height:7.55px;background:rgb(184,184,184)"></div><div class="a" style="left:384.80px;top:190.50px;width:6.8px;height:5.55px;background:rgb(214,214,214)"></div><div class="a" style="left:391.55px;top:190.50px;width:6.8px;height:5.55px;background:rgb(214,214,214)"></div><div class="a" style="left:398.30px;top:190.50px;width:6.8px;height:5.55px;background:rgb(222,222,222)"></div><div class="a" style="left:377.50px;top:199.00px;width:10px;height:12px;border-radius:6px;background:#e8e8e8"></div><div class="a" style="left:384.80px;top:196.00px;width:6.8px;height:5.05px;background:rgb(222,222,222)"></div><div class="a" style="left:391.55px;top:196.00px;width:6.8px;height:5.05px;background:rgb(238,238,238)"></div><div class="a" style="left:398.30px;top:196.00px;width:6.8px;height:5.05px;background:rgb(214,214,214)"></div><div class="a" style="left:384.80px;top:201.00px;width:6.8px;height:7.55px;background:rgb(208,208,208)"></div><div class="a" style="left:391.55px;top:201.00px;width:6.8px;height:7.55px;background:rgb(200,200,200)"></div><div class="a" style="left:398.30px;top:201.00px;width:6.8px;height:7.55px;background:rgb(208,208,208)"></div><div class="a" style="left:384.80px;top:208.50px;width:6.8px;height:5.55px;background:rgb(238,238,238)"></div><div class="a" style="left:391.55px;top:208.50px;width:6.8px;height:5.55px;background:rgb(222,222,222)"></div><div class="a" style="left:398.30px;top:208.50px;width:6.8px;height:5.55px;background:rgb(238,238,238)"></div><div class="a" style="left:377.50px;top:217.00px;width:10px;height:12px;border-radius:6px;background:#e8e8e8"></div><div class="a" style="left:384.80px;top:214.00px;width:6.8px;height:5.05px;background:rgb(222,222,222)"></div><div class="a" style="left:391.55px;top:214.00px;width:6.8px;height:5.05px;background:rgb(228,228,228)"></div><div class="a" style="left:398.30px;top:214.00px;width:6.8px;height:5.05px;background:rgb(234,234,234)"></div><div class="a" style="left:384.80px;top:219.00px;width:6.8px;height:7.55px;background:rgb(184,184,184)"></div><div class="a" style="left:391.55px;top:219.00px;width:6.8px;height:7.55px;background:rgb(184,184,184)"></div><div class="a" style="left:398.30px;top:219.00px;width:6.8px;height:7.55px;background:rgb(208,208,208)"></div><div class="a" style="left:384.80px;top:226.50px;width:6.8px;height:5.55px;background:rgb(228,228,228)"></div><div class="a" style="left:391.55px;top:226.50px;width:6.8px;height:5.55px;background:rgb(234,234,234)"></div><div class="a" style="left:398.30px;top:226.50px;width:6.8px;height:5.55px;background:rgb(238,238,238)"></div><div class="a" style="left:377.50px;top:235.00px;width:10px;height:12px;border-radius:6px;background:#e8e8e8"></div><div class="a" style="left:384.80px;top:232.00px;width:6.8px;height:5.05px;background:rgb(214,214,214)"></div><div class="a" style="left:391.55px;top:232.00px;width:6.8px;height:5.05px;background:rgb(228,228,228)"></div><div class="a" style="left:398.30px;top:232.00px;width:6.8px;height:5.05px;background:rgb(228,228,228)"></div><div class="a" style="left:384.80px;top:237.00px;width:6.8px;height:7.55px;background:rgb(192,192,192)"></div><div class="a" style="left:391.55px;top:237.00px;width:6.8px;height:7.55px;background:rgb(200,200,200)"></div><div class="a" style="left:398.30px;top:237.00px;width:6.8px;height:7.55px;background:rgb(184,184,184)"></div><div class="a" style="left:384.80px;top:244.50px;width:6.8px;height:5.55px;background:rgb(214,214,214)"></div><div class="a" style="left:391.55px;top:244.50px;width:6.8px;height:5.55px;background:rgb(238,238,238)"></div><div class="a" style="left:398.30px;top:244.50px;width:6.8px;height:5.55px;background:rgb(214,214,214)"></div><div class="a" style="left:377.50px;top:253.00px;width:10px;height:12px;border-radius:6px;background:#e8e8e8"></div><div class="a" style="left:384.80px;top:250.00px;width:6.8px;height:5.05px;background:rgb(234,234,234)"></div><div class="a" style="left:391.55px;top:250.00px;width:6.8px;height:5.05px;background:rgb(214,214,214)"></div><div class="a" style="left:398.30px;top:250.00px;width:6.8px;height:5.05px;background:rgb(228,228,228)"></div><div class="a" style="left:384.80px;top:255.00px;width:6.8px;height:7.55px;background:rgb(208,208,208)"></div><div class="a" style="left:391.55px;top:255.00px;width:6.8px;height:7.55px;background:rgb(184,184,184)"></div><div class="a" style="left:398.30px;top:255.00px;width:6.8px;height:7.55px;background:rgb(184,184,184)"></div><div class="a" style="left:384.80px;top:262.50px;width:6.8px;height:5.55px;background:rgb(214,214,214)"></div><div class="a" style="left:391.55px;top:262.50px;width:6.8px;height:5.55px;background:rgb(222,222,222)"></div><div class="a" style="left:398.30px;top:262.50px;width:6.8px;height:5.55px;background:rgb(222,222,222)"></div><div class="a" style="left:377.50px;top:271.00px;width:10px;height:12px;border-radius:6px;background:#e8e8e8"></div><div class="a" style="left:384.80px;top:268.00px;width:6.8px;height:5.05px;background:rgb(214,214,214)"></div><div class="a" style="left:391.55px;top:268.00px;width:6.8px;height:5.05px;background:rgb(234,234,234)"></div><div class="a" style="left:398.30px;top:268.00px;width:6.8px;height:5.05px;background:rgb(234,234,234)"></div><div class="a" style="left:384.80px;top:273.00px;width:6.8px;height:7.55px;background:rgb(208,208,208)"></div><div class="a" style="left:391.55px;top:273.00px;width:6.8px;height:7.55px;background:rgb(208,208,208)"></div><div class="a" style="left:398.30px;top:273.00px;width:6.8px;height:7.55px;background:rgb(184,184,184)"></div><div class="a" style="left:384.80px;top:280.50px;width:6.8px;height:5.55px;background:rgb(238,238,238)"></div><div class="a" style="left:391.55px;top:280.50px;width:6.8px;height:5.55px;background:rgb(222,222,222)"></div><div class="a" style="left:398.30px;top:280.50px;width:6.8px;height:5.55px;background:rgb(228,228,228)"></div><div class="a" style="left:377.50px;top:289.00px;width:10px;height:12px;border-radius:6px;background:#e8e8e8"></div><div class="a" style="left:384.80px;top:286.00px;width:6.8px;height:5.05px;background:rgb(228,228,228)"></div><div class="a" style="left:391.55px;top:286.00px;width:6.8px;height:5.05px;background:rgb(214,214,214)"></div><div class="a" style="left:398.30px;top:286.00px;width:6.8px;height:5.05px;background:rgb(228,228,228)"></div><div class="a" style="left:384.80px;top:291.00px;width:6.8px;height:7.55px;background:rgb(200,200,200)"></div><div class="a" style="left:391.55px;top:291.00px;width:6.8px;height:7.55px;background:rgb(184,184,184)"></div><div class="a" style="left:398.30px;top:291.00px;width:6.8px;height:7.55px;background:rgb(208,208,208)"></div><div class="a" style="left:384.80px;top:298.50px;width:6.8px;height:5.55px;background:rgb(214,214,214)"></div><div class="a" style="left:391.55px;top:298.50px;width:6.8px;height:5.55px;background:rgb(222,222,222)"></div><div class="a" style="left:398.30px;top:298.50px;width:6.8px;height:5.55px;background:rgb(222,222,222)"></div><div class="a" style="left:377.50px;top:307.00px;width:10px;height:12px;border-radius:6px;background:#e8e8e8"></div><div class="a" style="left:384.80px;top:304.00px;width:6.8px;height:5.05px;background:rgb(214,214,214)"></div><div class="a" style="left:391.55px;top:304.00px;width:6.8px;height:5.05px;background:rgb(214,214,214)"></div><div class="a" style="left:398.30px;top:304.00px;width:6.8px;height:5.05px;background:rgb(214,214,214)"></div><div class="a" style="left:384.80px;top:309.00px;width:6.8px;height:7.55px;background:rgb(208,208,208)"></div><div class="a" style="left:391.55px;top:309.00px;width:6.8px;height:7.55px;background:rgb(208,208,208)"></div><div class="a" style="left:398.30px;top:309.00px;width:6.8px;height:7.55px;background:rgb(192,192,192)"></div><div class="a" style="left:384.80px;top:316.50px;width:6.8px;height:5.55px;background:rgb(238,238,238)"></div><div class="a" style="left:391.55px;top:316.50px;width:6.8px;height:5.55px;background:rgb(222,222,222)"></div><div class="a" style="left:398.30px;top:316.50px;width:6.8px;height:5.55px;background:rgb(234,234,234)"></div><div class="a" style="left:377.50px;top:325.00px;width:10px;height:12px;border-radius:6px;background:#e8e8e8"></div><div class="a" style="left:384.80px;top:322.00px;width:6.8px;height:5.05px;background:rgb(238,238,238)"></div><div class="a" style="left:391.55px;top:322.00px;width:6.8px;height:5.05px;background:rgb(222,222,222)"></div><div class="a" style="left:398.30px;top:322.00px;width:6.8px;height:5.05px;background:rgb(222,222,222)"></div><div class="a" style="left:384.80px;top:327.00px;width:6.8px;height:7.55px;background:rgb(208,208,208)"></div><div class="a" style="left:391.55px;top:327.00px;width:6.8px;height:7.55px;background:rgb(208,208,208)"></div><div class="a" style="left:398.30px;top:327.00px;width:6.8px;height:7.55px;background:rgb(184,184,184)"></div><div class="a" style="left:384.80px;top:334.50px;width:6.8px;height:5.55px;background:rgb(234,234,234)"></div><div class="a" style="left:391.55px;top:334.50px;width:6.8px;height:5.55px;background:rgb(234,234,234)"></div><div class="a" style="left:398.30px;top:334.50px;width:6.8px;height:5.55px;background:rgb(222,222,222)"></div><div class="a" style="left:377.50px;top:343.00px;width:10px;height:12px;border-radius:6px;background:#e8e8e8"></div><div class="a" style="left:384.80px;top:340.00px;width:6.8px;height:5.05px;background:rgb(214,214,214)"></div><div class="a" style="left:391.55px;top:340.00px;width:6.8px;height:5.05px;background:rgb(228,228,228)"></div><div class="a" style="left:398.30px;top:340.00px;width:6.8px;height:5.05px;background:rgb(238,238,238)"></div><div class="a" style="left:384.80px;top:345.00px;width:6.8px;height:7.55px;background:rgb(200,200,200)"></div><div class="a" style="left:391.55px;top:345.00px;width:6.8px;height:7.55px;background:rgb(184,184,184)"></div><div class="a" style="left:398.30px;top:345.00px;width:6.8px;height:7.55px;background:rgb(192,192,192)"></div><div class="a" style="left:384.80px;top:352.50px;width:6.8px;height:5.55px;background:rgb(222,222,222)"></div><div class="a" style="left:391.55px;top:352.50px;width:6.8px;height:5.55px;background:rgb(234,234,234)"></div><div class="a" style="left:398.30px;top:352.50px;width:6.8px;height:5.55px;background:rgb(238,238,238)"></div><div class="a" style="left:377.50px;top:361.00px;width:10px;height:12px;border-radius:6px;background:#e8e8e8"></div><div class="a" style="left:384.80px;top:358.00px;width:6.8px;height:5.05px;background:rgb(238,238,238)"></div><div class="a" style="left:391.55px;top:358.00px;width:6.8px;height:5.05px;background:rgb(214,214,214)"></div><div class="a" style="left:398.30px;top:358.00px;width:6.8px;height:5.05px;background:rgb(214,214,214)"></div><div class="a" style="left:384.80px;top:363.00px;width:6.8px;height:7.55px;background:rgb(192,192,192)"></div><div class="a" style="left:391.55px;top:363.00px;width:6.8px;height:7.55px;background:rgb(192,192,192)"></div><div class="a" style="left:398.30px;top:363.00px;width:6.8px;height:7.55px;background:rgb(208,208,208)"></div><div class="a" style="left:384.80px;top:370.50px;width:6.8px;height:5.55px;background:rgb(228,228,228)"></div><div class="a" style="left:391.55px;top:370.50px;width:6.8px;height:5.55px;background:rgb(214,214,214)"></div><div class="a" style="left:398.30px;top:370.50px;width:6.8px;height:5.55px;background:rgb(238,238,238)"></div><div class="a" style="left:377.50px;top:379.00px;width:10px;height:12px;border-radius:6px;background:#e8e8e8"></div><div class="a" style="left:384.80px;top:376.00px;width:6.8px;height:5.05px;background:rgb(228,228,228)"></div><div class="a" style="left:391.55px;top:376.00px;width:6.8px;height:5.05px;background:rgb(228,228,228)"></div><div class="a" style="left:398.30px;top:376.00px;width:6.8px;height:5.05px;background:rgb(234,234,234)"></div><div class="a" style="left:384.80px;top:381.00px;width:6.8px;height:7.55px;background:rgb(184,184,184)"></div><div class="a" style="left:391.55px;top:381.00px;width:6.8px;height:7.55px;background:rgb(184,184,184)"></div><div class="a" style="left:398.30px;top:381.00px;width:6.8px;height:7.55px;background:rgb(184,184,184)"></div><div class="a" style="left:384.80px;top:388.50px;width:6.8px;height:5.55px;background:rgb(222,222,222)"></div><div class="a" style="left:391.55px;top:388.50px;width:6.8px;height:5.55px;background:rgb(238,238,238)"></div><div class="a" style="left:398.30px;top:388.50px;width:6.8px;height:5.55px;background:rgb(222,222,222)"></div><div class="a" style="left:377.50px;top:397.00px;width:10px;height:12px;border-radius:6px;background:#e8e8e8"></div><div class="a" style="left:384.80px;top:394.00px;width:6.8px;height:5.05px;background:rgb(214,214,214)"></div><div class="a" style="left:391.55px;top:394.00px;width:6.8px;height:5.05px;background:rgb(238,238,238)"></div><div class="a" style="left:398.30px;top:394.00px;width:6.8px;height:5.05px;background:rgb(228,228,228)"></div><div class="a" style="left:384.80px;top:399.00px;width:6.8px;height:7.55px;background:rgb(200,200,200)"></div><div class="a" style="left:391.55px;top:399.00px;width:6.8px;height:7.55px;background:rgb(208,208,208)"></div><div class="a" style="left:398.30px;top:399.00px;width:6.8px;height:7.55px;background:rgb(192,192,192)"></div><div class="a" style="left:384.80px;top:406.50px;width:6.8px;height:5.55px;background:rgb(238,238,238)"></div><div class="a" style="left:391.55px;top:406.50px;width:6.8px;height:5.55px;background:rgb(234,234,234)"></div><div class="a" style="left:398.30px;top:406.50px;width:6.8px;height:5.55px;background:rgb(238,238,238)"></div><div class="a" style="left:524.00px;top:117.5px;width:2.2px;height:383.50px;background:#e9eaed"></div><div class="a" style="left:526.50px;top:117.5px;width:416.50px;height:24.5px;background:#f7f7f8"></div><div class="a" style="left:526.50px;top:129px;width:416.50px;height:0.6px;background:#ececec"></div><div class="a" style="left:897.50px;top:117.5px;width:0.6px;height:11.5px;background:#ececec"></div><div class="t" style="left:705.00px;top:121.8px;font-size:6.6px;color:#555">2025</div><div class="c" style="left:525.20px;top:130.5px;width:62px;height:13.5px;font-size:6.6px;color:#4a4a4a">7月 2025</div><div class="a" style="left:587.20px;top:129px;width:0.6px;height:367px;background:#efefef"></div><div class="c" style="left:587.20px;top:130.5px;width:62px;height:13.5px;font-size:6.6px;color:#4a4a4a">8月 2025</div><div class="a" style="left:649.20px;top:129px;width:0.6px;height:367px;background:#efefef"></div><div class="c" style="left:649.20px;top:130.5px;width:62px;height:13.5px;font-size:6.6px;color:#4a4a4a">9月 2025</div><div class="a" style="left:711.20px;top:129px;width:0.6px;height:367px;background:#efefef"></div><div class="c" style="left:711.20px;top:130.5px;width:62px;height:13.5px;font-size:6.6px;color:#4a4a4a">10月 2025</div><div class="a" style="left:773.20px;top:129px;width:0.6px;height:367px;background:#efefef"></div><div class="c" style="left:773.20px;top:130.5px;width:62px;height:13.5px;font-size:6.6px;color:#4a4a4a">11月 2025</div><div class="a" style="left:835.20px;top:129px;width:0.6px;height:367px;background:#efefef"></div><div class="c" style="left:835.20px;top:130.5px;width:62px;height:13.5px;font-size:6.6px;color:#4a4a4a">12月 2025</div><div class="a" style="left:897.20px;top:129px;width:0.6px;height:367px;background:#efefef"></div><div class="c" style="left:897.20px;top:130.5px;width:62px;height:13.5px;font-size:6.6px;color:#4a4a4a">1月 2026</div><div class="a" style="left:586.20px;top:141.8px;width:0;height:354.20px;border-left:1px dotted #f5484a"></div><div class="c" style="left:586.20px;top:130px;width:18.8px;height:11.8px;background:#f5484a;border-radius:0 3px 3px 0;color:#fff;font-size:5.8px;padding-top:1.2px">今天</div><div class="a" style="left:0;top:150.3px;width:6.6px;height:27.4px;background:#c8c8c8;border-radius:0 3px 3px 0"></div><svg style="left:0.6px;top:162px" width="3" height="4" viewBox="0 0 3 4"><path d="M2.7 0V4L0 2Z" fill="#fff"/></svg><div class="a" style="left:0;top:496.5px;width:945px;height:4.5px;background:#fff;border-bottom:1px solid #f0f0f0"></div><div class="a" style="left:0;top:496.5px;width:261.50px;height:4.5px;background:#e9eaed;border-radius:0 2px 2px 0"></div><div class="a" style="left:526.00px;top:496.5px;width:215.50px;height:4.5px;background:#e9eaed;border-radius:0 2px 2px 0"></div><div class="a" style="left:943.00px;top:117.5px;width:2px;height:383.50px;background:#f0f0f0"></div></div></body></html>
